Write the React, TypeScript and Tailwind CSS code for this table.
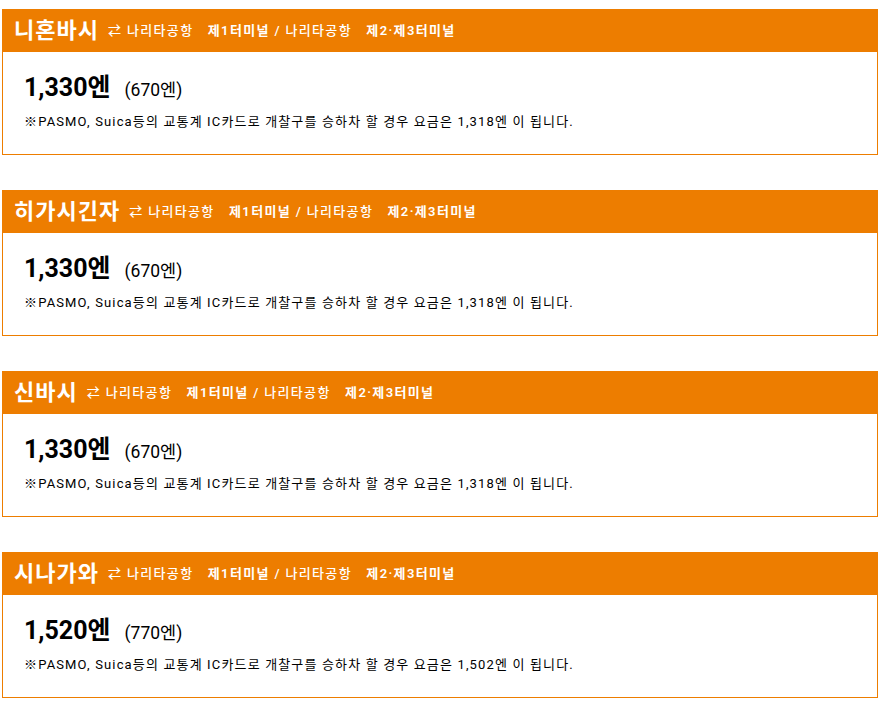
const fares = [
  { station: "니혼바시", price: "1,330", child: "670", ic: "1,318" },
  { station: "히가시긴자", price: "1,330", child: "670", ic: "1,318" },
  { station: "신바시", price: "1,330", child: "670", ic: "1,318" },
  { station: "시나가와", price: "1,520", child: "770", ic: "1,502" },
];

const font = { fontFamily: "Roboto, 'Noto Sans CJK KR', sans-serif" };

export default function App() {
  return (
    <div className="min-h-screen bg-white px-[2px] pt-[9px]" style={font}>
      {fares.map((f) => (
        <div key={f.station} className="mb-[35px] w-[876px]">
          <div className="flex h-[43px] items-center bg-[#ed7d00] pl-[12px] text-white">
            <span className="text-[22px] font-bold tracking-[1px]">{f.station}</span>
            <span className="ml-[9px] text-[13px] font-medium tracking-[1.35px]">
              ⇄ 나리타공항　<b className="font-semibold">제1터미널</b> / 나리타공항　<b className="font-semibold">제2·제3터미널</b>
            </span>
          </div>
          <div className="h-[103px] border border-t-0 border-[#ed7d00] px-[21px] pt-[17px]">
            <div className="flex items-baseline">
              <span className="text-[25px] font-bold text-black">{f.price}엔</span>
              <span className="ml-[14px] text-[17.5px] text-black">({f.child}엔)</span>
            </div>
            <p className="mt-[5px] text-[13px] tracking-[1.15px] text-black">
              ※PASMO, Suica등의 교통계 IC카드로 개찰구를 승하차 할 경우 요금은 {f.ic}엔 이 됩니다.
            </p>
          </div>
        </div>
      ))}
    </div>
  );
}
